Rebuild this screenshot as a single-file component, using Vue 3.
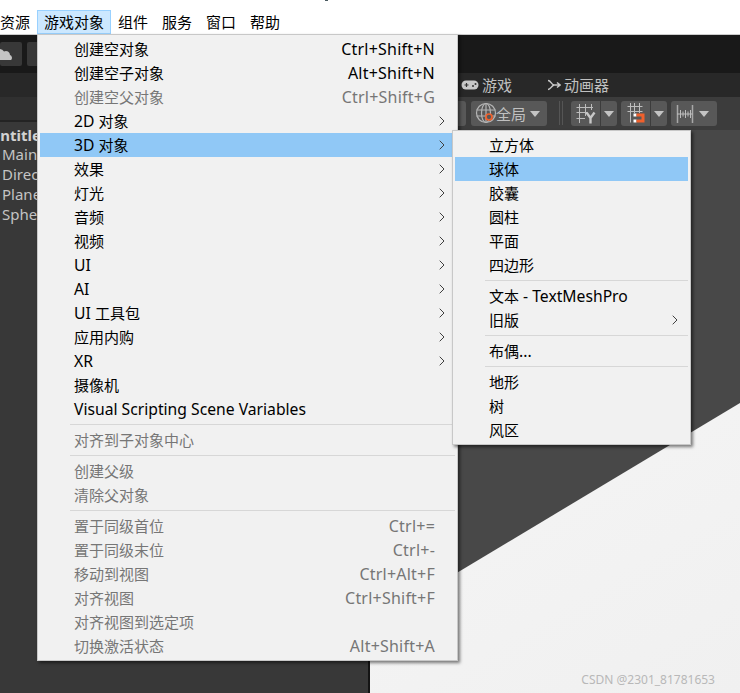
<script setup>
const menuBar = [
  { label: '资源' },
  { label: '游戏对象', active: true },
  { label: '组件' },
  { label: '服务' },
  { label: '窗口' },
  { label: '帮助' },
]
const mainMenu = [
  { label: '创建空对象', key: 'Ctrl+Shift+N' },
  { label: '创建空子对象', key: 'Alt+Shift+N' },
  { label: '创建空父对象', key: 'Ctrl+Shift+G', off: true },
  { label: '2D 对象', sub: true },
  { label: '3D 对象', sub: true, hot: true },
  { label: '效果', sub: true },
  { label: '灯光', sub: true },
  { label: '音频', sub: true },
  { label: '视频', sub: true },
  { label: 'UI', sub: true },
  { label: 'AI', sub: true },
  { label: 'UI 工具包', sub: true },
  { label: '应用内购', sub: true },
  { label: 'XR', sub: true },
  { label: '摄像机' },
  { label: 'Visual Scripting Scene Variables' },
  { sep: true },
  { label: '对齐到子对象中心', off: true },
  { sep: true },
  { label: '创建父级', off: true },
  { label: '清除父对象', off: true },
  { sep: true },
  { label: '置于同级首位', key: 'Ctrl+=', off: true },
  { label: '置于同级末位', key: 'Ctrl+-', off: true },
  { label: '移动到视图', key: 'Ctrl+Alt+F', off: true },
  { label: '对齐视图', key: 'Ctrl+Shift+F', off: true },
  { label: '对齐视图到选定项', off: true },
  { label: '切换激活状态', key: 'Alt+Shift+A', off: true },
]
const subMenu = [
  { label: '立方体' },
  { label: '球体', hot: true },
  { label: '胶囊' },
  { label: '圆柱' },
  { label: '平面' },
  { label: '四边形' },
  { sep: true },
  { label: '文本 - TextMeshPro' },
  { label: '旧版', sub: true },
  { sep: true },
  { label: '布偶...' },
  { sep: true },
  { label: '地形' },
  { label: '树' },
  { label: '风区' },
]
const tree = ['Main Camera', 'Directional Light', 'Plane', 'Sphere']

// Latin runs are set slightly larger than CJK runs, as in the original UI font.
const runs = (s) =>
  s.match(/[\u4e00-\u9fff]+|[^\u4e00-\u9fff]+/g).map((text) => ({
    text,
    lat: !/[\u4e00-\u9fff]/.test(text),
  }))
</script>

<template>
  <div class="app">
    <i class="crumb"></i>
    <header class="menubar">
      <span v-for="m in menuBar" :key="m.label" class="bar-item" :class="{ active: m.active }">{{ m.label }}</span>
    </header>

    <div class="editor">
      <div class="topstrip">
        <div class="strip-btn cloud-btn">
          <svg width="22" height="16" viewBox="0 0 22 16"><path d="M-6 14a4 4 0 0 1 1-7.500a5 5 0 0 1 9-1a4 4 0 0 1 6 3.500a3 3 0 0 1 1 5z" fill="#c4c4c4"/></svg>
        </div>
        <div class="strip-btn second-btn"></div>
      </div>

      <div class="tabs">
        <div class="tab game-tab">
          <svg width="18" height="10" viewBox="0 0 18 10"><rect x="0.500" y="0.500" width="17" height="9" rx="4.500" fill="#c8c8c8"/><path d="M3.500 5h4M5.500 3v4" stroke="#333" stroke-width="1.200"/><circle cx="12" cy="6" r="1" fill="#333"/><circle cx="14.500" cy="4" r="1" fill="#333"/></svg>
          <span>游戏</span>
        </div>
        <div class="tab anim-tab">
          <svg width="14" height="12" viewBox="0 0 14 12"><path d="M1 1.500c3 0 3 4 6 4.500h6M1 10.500c3 0 3-3.500 6-4.500M10 3.500l3 2.500-3 2.500" fill="none" stroke="#c8c8c8" stroke-width="1.500"/></svg>
          <span>动画器</span>
        </div>
      </div>

      <div class="work">
        <aside class="hierarchy">
          <div class="hier-head"></div>
          <div class="scene-name">Untitled</div>
          <div v-for="t in tree" :key="t" class="tree-row">{{ t }}</div>
        </aside>

        <section class="scene">
          <div class="toolbar">
            <div class="tool clipped"></div>
            <div class="tool global">
              <svg width="26" height="25" viewBox="0 0 26 25">
                <g fill="none" stroke="#b4b4b4" stroke-width="1.200">
                  <circle cx="12" cy="12" r="9.500"/>
                  <ellipse cx="12" cy="12" rx="4.500" ry="9.500"/>
                  <path d="M2.500 9h19M2.500 15h19M12 2.500v19"/>
                </g>
                <circle cx="15" cy="16" r="3" fill="#585858" stroke="#f0602c" stroke-width="1.700"/>
              </svg>
              <span>全局</span>
              <i class="caret"></i>
            </div>
            <div class="grip"></div>
            <div class="tool split">
              <div class="cell wide">
                <svg width="22" height="20" viewBox="0 0 22 20">
                  <path d="M1.500 3.500H18M1.500 8.500H12M1.500 14.500H10M4.500 0v19M10.500 0v12M16.500 0v6" fill="none" stroke="#bdbdbd" stroke-width="1"/>
                  <path d="M11.500 8.500l4 5.500 4-5.500M15.500 14v5.500" fill="none" stroke="#c8c8c8" stroke-width="2.400"/>
                </svg>
              </div>
              <div class="cell narrow"><i class="caret"></i></div>
            </div>
            <div class="tool split">
              <div class="cell wide">
                <svg width="24" height="22" viewBox="0 0 24 22">
                  <path d="M3.500 3.500h15M3.500 8.500h15M6.500 0v19.500M10.500 0v10M15.500 0v10" fill="none" stroke="#bdbdbd" stroke-width="1"/>
                  <rect x="9.500" y="10.500" width="3" height="3" fill="#fff"/>
                  <rect x="9.500" y="16.500" width="3" height="3" fill="#fff"/>
                  <path d="M12.500 10.500h8v9h-8v-3h5v-3h-5z" fill="#f0602c"/>
                </svg>
              </div>
              <div class="cell narrow"><i class="caret"></i></div>
            </div>
            <div class="tool split">
              <div class="cell wide plain">
                <svg width="22" height="20" viewBox="0 0 22 20">
                  <path d="M3.500 1v18M18.500 1v18" stroke="#a8a8a8" stroke-width="1.500"/>
                  <path d="M3 10h15.500M6.500 6v8M9 7.500v5M11.500 6v8M14 7.500v5M16.500 6v8" stroke="#bdbdbd" stroke-width="1"/>
                </svg>
              </div>
              <div class="cell narrow plain"><i class="caret"></i></div>
            </div>
          </div>
          <div class="viewport">
            <div class="ground"></div>
            <div class="watermark">CSDN @2301_81781653</div>
          </div>
        </section>
      </div>
    </div>

    <nav class="menu main-menu">
      <template v-for="(it, i) in mainMenu" :key="i">
        <div v-if="it.sep" class="sep"></div>
        <div v-else class="item" :class="{ off: it.off, hot: it.hot }">
          <span class="label"><span v-for="(r, j) in runs(it.label)" :key="j" :class="{ lat: r.lat }">{{ r.text }}</span></span>
          <span v-if="it.key" class="key">{{ it.key }}</span>
          <svg v-if="it.sub" class="chev" width="6" height="10" viewBox="0 0 6 10"><path d="M0.700 0.700L5 5L0.700 9.300" fill="none" stroke="#404040" stroke-width="1"/></svg>
        </div>
      </template>
    </nav>

    <nav class="menu sub-menu">
      <template v-for="(it, i) in subMenu" :key="i">
        <div v-if="it.sep" class="sep"></div>
        <div v-else class="item" :class="{ hot: it.hot }">
          <span class="label"><span v-for="(r, j) in runs(it.label)" :key="j" :class="{ lat: r.lat }">{{ r.text }}</span></span>
          <svg v-if="it.sub" class="chev" width="6" height="10" viewBox="0 0 6 10"><path d="M0.700 0.700L5 5L0.700 9.300" fill="none" stroke="#404040" stroke-width="1"/></svg>
        </div>
      </template>
    </nav>
  </div>
</template>

<style scoped>
.app {
  position: relative;
  width: 740px;
  height: 693px;
  overflow: hidden;
  display: flex;
  flex-direction: column;
  font-family: "Noto Sans", "Noto Sans CJK SC", sans-serif;
  font-size: 15px;
  color: #000;
  background: #fff;
}
.crumb {
  position: absolute;
  left: 325px;
  top: 0;
  width: 3px;
  height: 1px;
  background: #4a5a60;
}
.menubar {
  height: 34px;
  flex: none;
  box-sizing: border-box;
  padding: 10px 0 0;
  margin-left: -7px;
  display: flex;
  align-items: flex-start;
}
.bar-item {
  height: 24px;
  line-height: 24px;
  padding: 0 7px;
  box-sizing: border-box;
}
.bar-item.active {
  background: #cce8ff;
  outline: 1px solid #99d1ff;
  outline-offset: -1px;
}
.editor {
  flex: 1;
  min-height: 0;
  display: flex;
  flex-direction: column;
  background: #191919;
  border-top: 1px solid #ccc;
}
.topstrip {
  height: 38px;
  flex: none;
  display: flex;
  padding-top: 7px;
  gap: 5px;
  box-sizing: border-box;
}
.strip-btn {
  height: 24px;
  background: #383838;
  border-radius: 2px;
}
.cloud-btn {
  width: 22px;
  padding-top: 4px;
  box-sizing: border-box;
}
.second-btn { width: 20px; }
.tabs {
  height: 24px;
  flex: none;
  background: #282828;
  display: flex;
  align-items: center;
  position: relative;
  color: #c0c0c0;
  padding-left: 461px;
  line-height: 22px;
}
.tab {
  display: flex;
  align-items: center;
  gap: 3px;
  height: 24px;
}
.game-tab { width: 86px; }
.work {
  flex: 1;
  min-height: 0;
  display: flex;
}
.hierarchy {
  width: 368px;
  flex: none;
  background: #383838;
  border-right: 2px solid #141414;
  color: #c4c4c4;
  overflow: hidden;
}
.hier-head {
  height: 23px;
  background: #303030;
  border-bottom: 2px solid #232323;
}
.scene-name {
  height: 20px;
  line-height: 20px;
  margin: 3px 0 -1px -11px;
  font-weight: 700;
  color: #d2d2d2;
}
.tree-row {
  height: 20px;
  line-height: 20px;
  padding-left: 2px;
  white-space: nowrap;
}
.scene {
  flex: 1;
  min-width: 0;
  display: flex;
  flex-direction: column;
}
.toolbar {
  height: 33px;
  flex: none;
  background: #3c3c3c;
  display: flex;
  padding: 4px 0 0 84px;
  box-sizing: border-box;
  gap: 4px;
}
.tool {
  height: 25px;
  background: #585858;
  border-radius: 3px;
  display: flex;
  align-items: center;
}
.clipped {
  width: 12px;
  margin-right: 1px;
}
.global {
  width: 76px;
  color: #c0c0c0;
  padding-left: 3px;
  box-sizing: border-box;
}
.global svg { margin-right: -4px; }
.global .caret { margin-left: 4px; }
.grip {
  width: 4px;
  height: 24px;
  margin: 0 4px 0 8px;
  border-left: 1px solid #555;
  border-right: 1px solid #555;
  box-sizing: border-box;
}
.split { width: 46px; overflow: hidden; }
.cell {
  height: 25px;
  display: flex;
  align-items: center;
  justify-content: center;
}
.wide { width: 29px; flex: none; }
.narrow {
  width: 17px;
  flex: none;
  border-left: 1px solid #3c3c3c;
  box-sizing: border-box;
}
.plain.wide { width: 27px; }
.plain.narrow {
  width: 19px;
  border-left: 0;
  justify-content: flex-start;
  padding-left: 1px;
}
.caret {
  display: block;
  width: 0;
  height: 0;
  border-left: 5px solid transparent;
  border-right: 5px solid transparent;
  border-top: 6px solid #c4c4c4;
}
.viewport {
  flex: 1;
  min-height: 0;
  position: relative;
  background: #484848;
}
.ground {
  position: absolute;
  inset: 0;
  background: linear-gradient(150deg, #f8f8f8, #f0f0f0);
  clip-path: polygon(0 495px, 370px 273px, 370px 563px, 0 563px);
}
.watermark {
  position: absolute;
  right: 25px;
  bottom: 5px;
  font-size: 12px;
  line-height: 16px;
  color: #b8b8b8;
  white-space: nowrap;
}
.menu {
  position: absolute;
  box-sizing: border-box;
  padding: 2px;
  background: #f1f1f1;
  border: 1px solid #c8c8c8;
  box-shadow: 2px 2px 3px rgba(0, 0, 0, 0.5);
}
.main-menu { left: 37px; top: 34px; width: 421px; }
.sub-menu { left: 452px; top: 130px; width: 239px; }
.item {
  position: relative;
  height: 24px;
  line-height: 24px;
  padding: 0 20px 0 34px;
  display: flex;
  justify-content: space-between;
  white-space: nowrap;
}
.item.off { color: #767676; }
.item.hot { background: #90c8f6; }
.lat { font-size: 15.7px; }
.key { font-size: 16px; letter-spacing: 0.22px; }
.chev {
  position: absolute;
  right: 10px;
  top: 7px;
}
.sep {
  height: 1px;
  margin: 3px 0 3px 30px;
  background: #d7d7d7;
}
</style>

<style>
html, body { background: #fff; }
</style>
